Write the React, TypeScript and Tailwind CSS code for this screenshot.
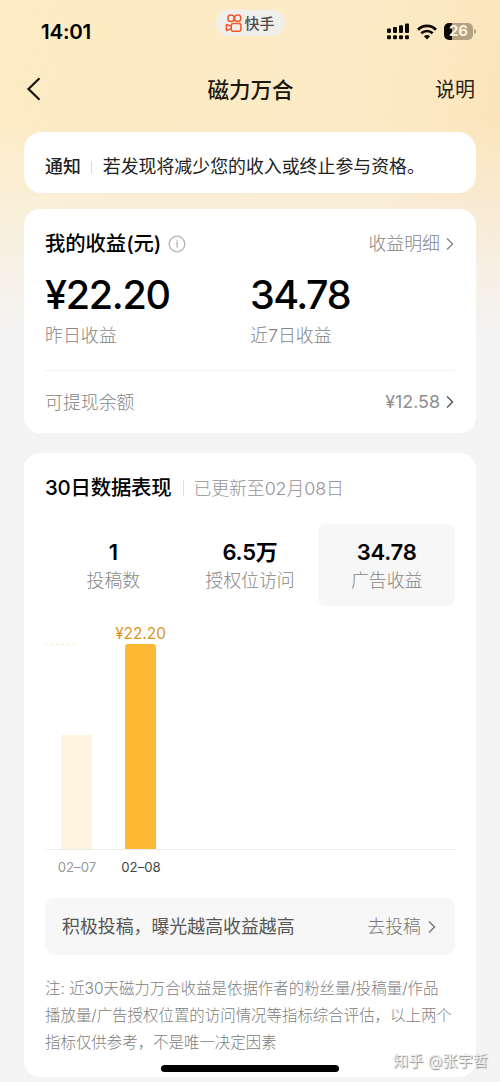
import React from 'react';

const metrics = [
  { value: '1', label: '投稿数', active: false },
  { value: '6.5万', label: '授权位访问', active: false },
  { value: '34.78', label: '广告收益', active: true },
];

const bars = [
  { date: '02–07', height: 114, active: false, value: '' },
  { date: '02–08', height: 205, active: true, value: '¥22.20' },
];

const noteLines = [
  '注: 近30天磁力万合收益是依据作者的粉丝量/投稿量/作品',
  '播放量/广告授权位置的访问情况等指标综合评估，以上两个',
  '指标仅供参考，不是唯一决定因素',
];

const Chevron = ({ className = '' }: { className?: string }) => (
  <svg viewBox="0 0 8 14" className={`h-[14px] w-2 ${className}`} fill="none" stroke="currentColor" strokeWidth="1.4">
    <path d="M1 1.5 6.6 7 1 12.5" />
  </svg>
);

const KuaishouLogo = () => (
  <svg viewBox="0 0 18 20" className="h-5 w-[18px]" fill="none" stroke="#f2592a" strokeWidth="1.5">
    <circle cx="6" cy="5.2" r="3.2" />
    <circle cx="12.7" cy="5.2" r="3.2" />
    <rect x="6.3" y="10.5" width="9.6" height="7.8" rx="2" />
    <path d="M6.3 13.2 1.4 11.4v6.2l4.9-1.9" strokeLinejoin="round" />
  </svg>
);

const Signal = () => (
  <svg viewBox="0 0 23 17" className="h-[17px] w-[23px]" fill="#0d0a05">
    <rect x="0" y="5.5" width="4" height="4.5" rx="1" />
    <rect x="6" y="4" width="4" height="6" rx="1" />
    <rect x="12" y="2.2" width="4" height="7.8" rx="1" />
    <rect x="18" y="0.5" width="4" height="9.5" rx="1" />
    <rect x="0" y="12.2" width="4" height="4" rx="1.2" />
    <rect x="6" y="12.2" width="4" height="4" rx="1.2" />
    <rect x="12" y="12.2" width="4" height="4" rx="1.2" />
    <rect x="18" y="12.2" width="4" height="4" rx="1.2" />
  </svg>
);

const Wifi = () => (
  <svg viewBox="0 0 20 16" className="h-4 w-5" fill="none" stroke="#0d0a05" strokeWidth="2.7">
    <path d="M1 5.7C6.2.7 13.8.7 19 5.7" />
    <path d="M4.3 9.3c3.3-3.1 8.1-3.1 11.4 0" />
    <path d="M10 15.4 6.9 12.2c1.8-1.6 4.4-1.6 6.2 0z" fill="#0d0a05" stroke="none" />
  </svg>
);

const StatusBar = () => (
  <div className="flex h-[58px] justify-between">
    <div className="w-[180px] pt-[19px] pl-[41px] text-[20.5px] leading-[26px] font-semibold tracking-[-0.2px]">14:01</div>
    <div className="mt-[10px] flex h-[26px] w-[69px] items-center gap-[2px] rounded-full bg-[#f1efec] pl-[9px]">
      <KuaishouLogo />
      <span className="pt-px text-[15px] leading-5 font-medium whitespace-nowrap text-[#4c4c4f]">快手</span>
    </div>
    <div className="flex h-[63px] w-[180px] items-center justify-end pr-[24px]">
      <Signal />
      <div className="ml-[7px]">
        <Wifi />
      </div>
      <div className="ml-[7px] flex h-[17px] w-[29px] items-center justify-center rounded-[5px] bg-[linear-gradient(90deg,#0d0a05_26%,#b7a184_26%)] text-[15px] font-bold text-[#fdf1d8]">
        26
      </div>
      <div className="ml-px h-[5px] w-[2px] rounded-r bg-[#b7a184]" />
    </div>
  </div>
);

const App = () => {
  return (
    <div
      lang="zh-CN"
      className="h-[1082px] w-[500px] overflow-hidden bg-[#f4f4f4] bg-[linear-gradient(180deg,rgba(244,244,244,0)_0px,rgba(244,244,244,0)_120px,#f4f4f4_335px),linear-gradient(100deg,#fdecc6_0%,#fceac4_55%,#fbdeb2_100%)] font-[Inter,'Noto_Sans_CJK_SC',sans-serif] text-black"
    >
      <div className="h-[132px] bg-[repeating-linear-gradient(25deg,rgba(246,216,150,0.08)_0px,rgba(246,216,150,0.08)_2px,transparent_3px,transparent_6px),repeating-linear-gradient(60deg,rgba(255,245,215,0.12)_0px,rgba(255,245,215,0.12)_2px,transparent_3px,transparent_7px)] bg-[size:170px_132px,180px_132px] bg-[position:left_top,270px_0px] bg-no-repeat">
        <StatusBar />
        <div className="flex h-[62px] items-center justify-between pr-[25px] pl-[26px]">
          <svg viewBox="0 0 15 24" className="h-6 w-[50px]" fill="none" stroke="#17120a" strokeWidth="2.2" preserveAspectRatio="xMinYMid">
            <path d="M13.5 1.2 2.5 12l11 10.8" />
          </svg>
          <h1 className="pt-[2px] text-[21.5px] font-medium text-[#1c170e]">磁力万合</h1>
          <span className="w-[50px] pt-px text-right text-[20px] whitespace-nowrap text-[#29231a]">说明</span>
        </div>
      </div>

      <div className="mx-6 flex h-[61px] items-center rounded-[18px] bg-white px-[21px] pt-[9px] text-[17.9px] text-[#222]">
        <span className="font-medium">通知</span>
        <span className="mr-[11px] ml-[10px] h-3 w-px bg-[#dcdcdc]" />
        <span className="whitespace-nowrap">若发现将减少您的收入或终止参与资格。</span>
      </div>

      <section className="mx-6 mt-4 h-[224px] rounded-[16px] bg-white px-[21px] pt-[20px]">
        <div className="flex h-[30px] items-center justify-between">
          <div className="flex items-center gap-2">
            <h2 className="text-[20.4px] font-medium tracking-[-0.1px]">我的收益(元)</h2>
            <svg viewBox="0 0 18 18" className="-ml-px h-[18px] w-[18px]" fill="none" stroke="#b5b5b5" strokeWidth="1.3">
              <circle cx="9" cy="9" r="7.8" />
              <path d="M7.8 8H9.2v4.8M9.1 4.9v1.4" />
            </svg>
          </div>
          <div className="flex items-center gap-[6px] pr-[1px] text-[17.9px] font-light text-[#858585]">
            收益明细
            <Chevron />
          </div>
        </div>

        <div className="grid grid-cols-2 pt-[14px]">
          <div>
            <p className="text-[39.5px] leading-[44px] font-medium tracking-[-1.3px]">¥22.20</p>
            <p className="mt-[6px] text-[17.9px] leading-[25px] font-light text-[#858585]">昨日收益</p>
          </div>
          <div>
            <p className="text-[39.5px] leading-[44px] font-medium tracking-[-1.5px]">34.78</p>
            <p className="mt-[6px] text-[17.9px] leading-[25px] font-light text-[#858585]">近7日收益</p>
          </div>
        </div>

        <div className="mt-[22px] flex h-[64px] items-center justify-between border-t border-[#f3f3f3] pr-[1px] text-[17.9px] text-[#8f8f8f]">
          <span className="pt-px font-light text-[#858585]">可提现余额</span>
          <span className="flex items-center gap-[6px]">
            ¥12.58
            <Chevron className="text-[#555]" />
          </span>
        </div>
      </section>

      <section className="mx-6 mt-5 h-[624px] rounded-[16px] bg-white px-[21px] pt-[20px]">
        <div className="flex h-[30px] items-center whitespace-nowrap">
          <h2 className="text-[20.4px] font-medium tracking-[-0.2px]">30日数据表现</h2>
          <span className="mr-[10px] ml-[11px] h-4 w-px bg-[#dedede]" />
          <span className="pt-[2px] text-[17.9px] font-light tracking-[-0.1px] text-[#949494]">已更新至02月08日</span>
        </div>

        <div className="mt-[21px] grid grid-cols-3">
          {metrics.map((metric) => (
            <div
              key={metric.label}
              className={`flex h-[82px] flex-col items-center rounded-[8px] pt-[14px] ${metric.active ? 'bg-[#f7f7f7]' : ''}`}
            >
              <p className="text-[22px] leading-[28px] font-semibold tracking-[-0.2px]">{metric.value}</p>
              <p className="mt-[2px] text-[17.9px] leading-[25px] font-light text-[#858585]">{metric.label}</p>
            </div>
          ))}
        </div>

        <div className="relative flex h-[244px] items-end border-b border-[#ececec] pl-[16px]">
          <div className="absolute top-[38px] left-0 w-[30px] border-t border-dashed border-[#fcecce]" />
          {bars.map((bar) => (
            <div key={bar.date} className="mr-[33px] flex w-[31px] flex-col items-center">
              <span className="text-[15.4px] leading-[21px] text-[#d8951d]">{bar.value}</span>
              <div
                className={`w-full ${bar.active ? 'rounded-t-[3px] bg-[#fdb933]' : 'bg-[#fff4df]'}`}
                style={{ height: bar.height }}
              />
            </div>
          ))}
        </div>
        <div className="flex pt-[8px] text-[13.2px] leading-[18px]">
          {bars.map((bar) => (
            <span key={bar.date} className={`w-16 text-center whitespace-nowrap ${bar.active ? 'text-[#444]' : 'text-[#999]'}`}>
              {bar.date}
            </span>
          ))}
        </div>

        <div className="mt-[22px] flex h-[57px] items-center justify-between rounded-[9px] bg-[#f7f7f7] pt-[2px] pr-[19px] pl-[17px] text-[17.9px]">
          <span className="text-[#555]">积极投稿，曝光越高收益越高</span>
          <span className="flex items-center gap-[7px] font-light text-[#757575]">
            去投稿
            <Chevron />
          </span>
        </div>

        <div className="mt-[20px] text-[15.44px] leading-[27px] font-light whitespace-nowrap text-[#808080]">
          {noteLines.map((line) => (
            <p key={line}>{line}</p>
          ))}
        </div>
      </section>

      {/* home indicator and author mark float over the page */}
      <div className="absolute top-[1065px] left-[161px] h-[7px] w-[178px] rounded-full bg-black" />
      <div className="absolute top-[1050px] left-[393px] text-[15.2px] leading-[22px] whitespace-nowrap text-[#ececec] [text-shadow:1px_1px_1px_#8c8c8c]">
        知乎 @张宇哲
      </div>
    </div>
  );
};

export default App;
